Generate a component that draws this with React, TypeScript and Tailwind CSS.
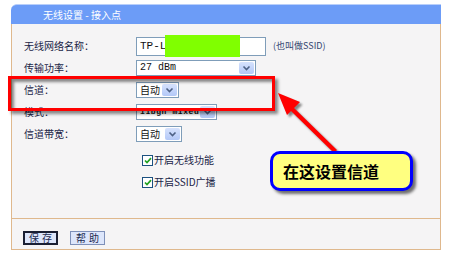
const cjk = { fontFamily: '"Noto Sans CJK SC", "Liberation Sans", sans-serif' }
const mono = { fontFamily: '"Liberation Mono", "Noto Sans CJK SC", monospace' }

function Chevron() {
  return (
    <svg width="9" height="6" viewBox="0 0 9 6">
      <path d="M1.5 1.5 L4.5 4.5 L7.5 1.5" fill="none" stroke="#4d6185" strokeWidth="1.6" />
    </svg>
  )
}

function Select({ value, width, kind }: { value: string; width: string; kind?: 'mono' | 'tight' }) {
  const textClass =
    kind === 'tight'
      ? 'text-[8px] tracking-[0.6px] font-bold'
      : kind === 'mono'
        ? 'text-[10px]'
        : 'text-[10px]'
  return (
    <div className={`${width} h-[16px] flex items-stretch border border-[#7f9db9] bg-white`}>
      <span
        className={`flex-1 flex items-center pl-[3px] text-[#111] leading-none whitespace-nowrap overflow-hidden ${textClass}`}
        style={kind ? mono : cjk}
      >
        {value}
      </span>
      <span className="w-[15px] shrink-0 m-px flex items-center justify-center bg-gradient-to-b from-[#d6e2fd] to-[#b3c8f7] rounded-[2px]">
        <Chevron />
      </span>
    </div>
  )
}

function Checkbox({ label }: { label: string }) {
  return (
    <div className="flex items-center gap-[1px]">
      <span className="w-[11px] h-[11px] border border-[#1c5180] bg-white flex items-center justify-center">
        <svg width="8" height="7" viewBox="0 0 8 7">
          <path d="M1 3.5 L3 5.5 L7 1.2" fill="none" stroke="#21a121" strokeWidth="1.7" />
        </svg>
      </span>
      <span className="text-[10px] text-[#1a2447] leading-none" style={cjk}>{label}</span>
    </div>
  )
}

function Row({ label, children }: { label?: string; children: React.ReactNode }) {
  return (
    <div className="h-[22px] grid grid-cols-[112px_1fr] items-center pl-[12px]">
      <span className="text-[10px] text-[#1a2447] leading-none" style={cjk}>{label}</span>
      <div className="flex items-center">{children}</div>
    </div>
  )
}

export default function App() {
  return (
    <div className="w-[450px] h-[263px] bg-white relative overflow-hidden" style={cjk}>
      <div className="ml-[11px] mt-[4px] w-[430px]">
        <div className="h-[20px] rounded-tl-[6px] bg-[#6c9cf7] border-t border-[#b9cffa] flex items-center pl-[32px] text-white text-[10px]">
          无线设置 - 接入点
        </div>
        <div className="border-x border-b border-[#dfb88d] bg-[#f5f4f5]">
          <div className="pt-[11px]">
            <Row label="无线网络名称：">
              <div className="w-[130px] h-[19px] border border-[#7f9db9] bg-white flex items-center pl-[3px] text-[11px] text-[#111]" style={mono}>
                TP-L1
              </div>
              <span className="ml-[7px] text-[9px] text-[#33446f]" style={cjk}>(也叫做SSID)</span>
            </Row>
            <Row label="传输功率：">
              <Select value="27 dBm" width="w-[120px]" kind="mono" />
            </Row>
            <Row label="信道：">
              <Select value="自动" width="w-[43px]" />
            </Row>
            <Row label="模式：">
              <Select value="11bgn mixed" width="w-[81px]" kind="tight" />
            </Row>
            <Row label="信道带宽：">
              <Select value="自动" width="w-[46px]" />
            </Row>
            <div className="mt-[4px]">
              <Row>
                <span className="ml-[6px]"><Checkbox label="开启无线功能" /></span>
              </Row>
              <Row>
                <span className="ml-[6px]"><Checkbox label="开启SSID广播" /></span>
              </Row>
            </div>
          </div>
          <div className="mt-[25px] border-t border-[#dfb88d] h-[31px] flex items-start pt-[12px] pl-[11px] gap-[12px]">
            <button className="w-[35px] h-[14px] border-2 border-[#1a1f33] bg-[#dde6fb] text-[10px] leading-none text-[#1d2b50] tracking-[3px] flex items-center justify-center pl-[3px]">
              保存
            </button>
            <button className="w-[35px] h-[14px] border border-[#7e90b9] bg-[#dde6fb] text-[10px] leading-none text-[#1d2b50] tracking-[3px] flex items-center justify-center pl-[3px]">
              帮助
            </button>
          </div>
        </div>
      </div>

      {/* green mask over the SSID */}
      <div className="absolute left-[165px] top-[35px] w-[75px] h-[22px] bg-[#80ff00]" />

      {/* red highlight frame */}
      <div className="absolute left-[8px] top-[76px] w-[267px] h-[35px] border-[3px] border-[#ff0000] shadow-[3px_3px_3px_rgba(0,0,0,0.45),inset_3px_3px_3px_rgba(0,0,0,0.45)]" />

      {/* arrow */}
      <svg className="absolute left-0 top-0" width="450" height="263" viewBox="0 0 450 263">
        <defs>
          <filter id="blur" x="-20%" y="-20%" width="140%" height="140%">
            <feGaussianBlur stdDeviation="1.2" />
          </filter>
        </defs>
        <g transform="translate(2.5 2.5)" filter="url(#blur)" fill="#555" opacity="0.7">
          <polygon points="278,93 300,102 294,108 337,150 334,153 291,111 287,115" />
        </g>
        <polygon points="278,93 300,102 294,108 337,150 334,153 291,111 287,115" fill="#ff0000" />
      </svg>

      {/* callout */}
      <div className="absolute left-[270px] top-[151px] w-[143px] h-[40px] rounded-[10px] border-[3px] border-[#0000ff] bg-[#ffff80] shadow-[3px_3px_3px_rgba(0,0,0,0.55)] flex items-center pl-[10px]">
        <span className="text-[16px] font-bold text-black leading-none" style={cjk}>在这设置信道</span>
      </div>
    </div>
  )
}
